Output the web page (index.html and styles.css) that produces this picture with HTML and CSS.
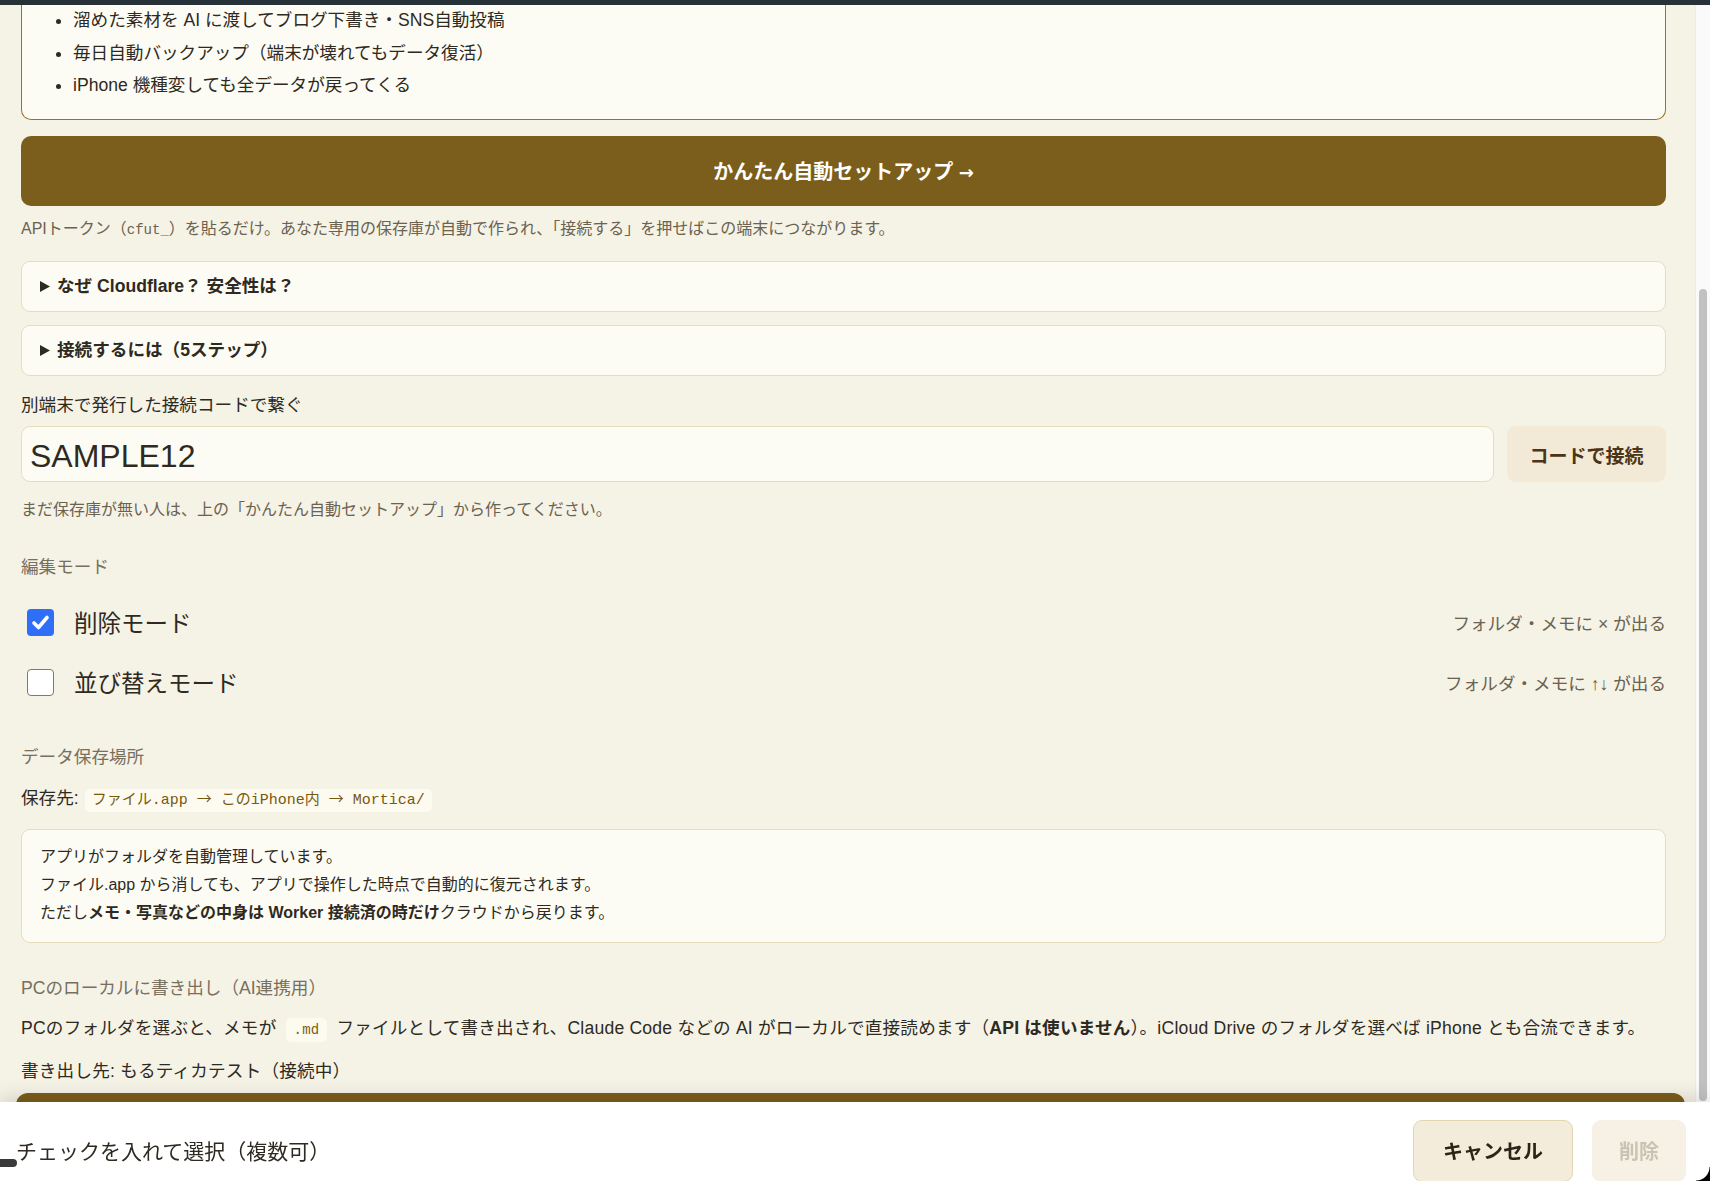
FILE: index.html
```html
<!DOCTYPE html>
<html lang="ja">
<head>
    <meta charset="UTF-8">
    <meta name="viewport" content="width=device-width, initial-scale=1.0">
    <title>設定</title>
    <link rel="stylesheet" href="styles.css">
</head>
<body>
    <div class="top-bar"></div>

    <div class="frame">
        <main class="sheet">
            <div class="feature-box">
                <ul>
                    <li>溜めた素材を AI に渡してブログ下書き・SNS自動投稿</li>
                    <li>毎日自動バックアップ（端末が壊れてもデータ復活）</li>
                    <li>iPhone 機種変しても全データが戻ってくる</li>
                </ul>
            </div>

            <button type="button" class="setup-button">かんたん自動セットアップ <span class="arrow">→</span></button>
            <p class="help">APIトークン（<code>cfut_</code>）を貼るだけ。あなた専用の保存庫が自動で作られ、「接続する」を押せばこの端末につながります。</p>

            <details class="fold">
                <summary><svg class="caret" width="10" height="11" viewBox="0 0 10 11"><path d="M0 0 L10 5.5 L0 11 Z" fill="#2e2a22"/></svg>なぜ Cloudflare？ 安全性は？</summary>
            </details>
            <details class="fold fold-second">
                <summary><svg class="caret" width="10" height="11" viewBox="0 0 10 11"><path d="M0 0 L10 5.5 L0 11 Z" fill="#2e2a22"/></svg>接続するには（5ステップ）</summary>
            </details>

            <label class="field-label" for="code">別端末で発行した接続コードで繋ぐ</label>
            <div class="code-row">
                <input type="text" id="code" class="code-input" value="SAMPLE12">
                <button type="button" class="code-button">コードで接続</button>
            </div>
            <p class="note">まだ保存庫が無い人は、上の「かんたん自動セットアップ」から作ってください。</p>

            <h3 class="section-title edit-title">編集モード</h3>
            <div class="mode-list">
                <div class="mode-row">
                    <span class="check checked">
                        <svg width="27" height="27" viewBox="0 0 27 27"><path d="M7 14 L11.5 18.5 L20 8.5" fill="none" stroke="#ffffff" stroke-width="3.6" stroke-linecap="round" stroke-linejoin="round"/></svg>
                    </span>
                    <span class="mode-name">削除モード</span>
                    <span class="mode-hint">フォルダ・メモに × が出る</span>
                </div>
                <div class="mode-row">
                    <span class="check"></span>
                    <span class="mode-name">並び替えモード</span>
                    <span class="mode-hint">フォルダ・メモに ↑↓ が出る</span>
                </div>
            </div>

            <h3 class="section-title storage-title">データ保存場所</h3>
            <p class="path-line">保存先:<code class="path-chip">ファイル.app <span class="chip-arrow">→</span> このiPhone内 <span class="chip-arrow">→</span> Mortica/</code></p>
            <div class="info-box">
                <p>アプリがフォルダを自動管理しています。</p>
                <p>ファイル.app から消しても、アプリで操作した時点で自動的に復元されます。</p>
                <p>ただし<strong>メモ・写真などの中身は Worker 接続済の時だけ</strong>クラウドから戻ります。</p>
            </div>

            <h3 class="section-title export-title">PCのローカルに書き出し（AI連携用）</h3>
            <p class="body-text">PCのフォルダを選ぶと、メモが <code class="inline-chip">.md</code> ファイルとして書き出され、Claude Code などの AI がローカルで直接読めます（<strong>API は使いません</strong>）。iCloud Drive のフォルダを選べば iPhone とも合流できます。</p>
            <p class="body-text export-target">書き出し先: もるティカテスト（接続中）</p>
            <button type="button" class="export-button">フォルダを選ぶ</button>
        </main>

        <div class="scrollbar"><div class="thumb"></div></div>
    </div>

    <div class="action-bar">
        <span class="action-text">チェックを入れて選択（複数可）</span>
        <div class="action-buttons">
            <button type="button" class="cancel-button">キャンセル</button>
            <button type="button" class="delete-button" disabled>削除</button>
        </div>
    </div>
    <div class="dock-handle"></div>
    <div class="window-corner"></div>
</body>
</html>
```

FILE: styles.css
```css
body {
    font-family: "Liberation Sans", "Noto Sans CJK JP", sans-serif;
    background-color: #f5f2e6;
    color: #2e2a22;
    margin: 0;
    height: 100vh;
    overflow: hidden;
}
p, h3, ul {
    margin: 0;
}
.top-bar {
    height: 5px;
    background-color: #263238;
}
.frame {
    display: flex;
    height: calc(100vh - 5px);
    overflow: hidden;
}
.sheet {
    flex: 1;
    padding: 0 29px 0 21px;
    overflow: hidden;
}
.feature-box {
    background-color: #fdfcf4;
    border: 1px solid #93742a;
    border-top: 0;
    border-radius: 0 0 10px 10px;
    padding: 2px 16px 21px;
}
.feature-box ul {
    padding-left: 35px;
    font-size: 17.6px;
    line-height: 26px;
}
.feature-box li + li {
    margin-top: 6.5px;
}
.setup-button {
    display: block;
    width: 100%;
    height: 70px;
    margin-top: 16px;
    padding-bottom: 3px;
    border: 0;
    border-radius: 10px;
    background-color: #7b5e1b;
    color: #ffffff;
    font-family: inherit;
    font-size: 20px;
    font-weight: bold;
}
.setup-button .arrow {
    font-family: "DejaVu Sans", sans-serif;
    font-size: 18px;
}
.help {
    margin-top: 11px;
    font-size: 16px;
    line-height: 24px;
    color: #6b6250;
}
.help code {
    font-family: "Liberation Mono", monospace;
    font-size: 14px;
}
.fold {
    margin-top: 19px;
    background-color: #fdfcf4;
    border: 1px solid #e7dcbc;
    border-radius: 9px;
}
.fold-second {
    margin-top: 13px;
}
.fold summary {
    display: flex;
    align-items: center;
    list-style: none;
    padding: 12px 18px;
    font-size: 17.6px;
    font-weight: bold;
    line-height: 25px;
}
.fold summary::-webkit-details-marker {
    display: none;
}
.caret {
    margin-right: 7px;
}
.field-label {
    display: block;
    margin-top: 16px;
    font-size: 17.6px;
    line-height: 26px;
}
.code-row {
    display: flex;
    gap: 13px;
    margin-top: 8px;
}
.code-input {
    flex: 1;
    height: 56px;
    box-sizing: border-box;
    padding: 5px 8px 0;
    border: 1px solid #e7dcbc;
    border-radius: 9px;
    background-color: #fdfcf4;
    color: #2e2a22;
    font-family: "Liberation Sans", sans-serif;
    font-size: 32px;
    outline: none;
}
.code-button {
    width: 159px;
    height: 56px;
    border: 0;
    border-radius: 9px;
    background-color: #f2e9d6;
    color: #4a3516;
    font-family: inherit;
    font-size: 19px;
    font-weight: bold;
}
.note {
    margin-top: 16px;
    font-size: 16px;
    line-height: 24px;
    color: #6b6250;
}
.section-title {
    font-size: 17.6px;
    font-weight: normal;
    line-height: 26px;
    color: #786f5e;
}
.edit-title {
    margin-top: 32px;
}
.mode-list {
    display: flex;
    flex-direction: column;
    gap: 16px;
    margin-top: 20px;
}
.mode-row {
    display: flex;
    align-items: center;
    height: 44px;
}
.check {
    width: 27px;
    height: 27px;
    box-sizing: border-box;
    margin-left: 6px;
    border: 1.5px solid #7a7a7a;
    border-radius: 4px;
    background-color: #ffffff;
}
.check.checked {
    border: 0;
    background-color: #2f6ef6;
}
.check svg {
    display: block;
}
.mode-name {
    flex: 1;
    margin-left: 20px;
    font-size: 23.5px;
}
.mode-hint {
    font-size: 17.6px;
    color: #6b6250;
}
.storage-title {
    margin-top: 40px;
}
.path-line {
    margin-top: 13px;
    font-size: 17.6px;
    line-height: 30px;
}
.path-chip {
    margin-left: 6px;
    padding: 3px 7px;
    border-radius: 5px;
    background-color: #fdfbf0;
    color: #7a580e;
    font-family: "Liberation Mono", "Noto Sans CJK JP", monospace;
    font-size: 15px;
}
.chip-arrow {
    font-family: "Noto Sans CJK JP", sans-serif;
}
.info-box {
    margin-top: 13px;
    padding: 13px 18px 15px;
    background-color: #fdfcf4;
    border: 1px solid #e7dcbc;
    border-radius: 9px;
    font-size: 16px;
    line-height: 28px;
}
.export-title {
    margin-top: 32px;
}
.body-text {
    margin-top: 12px;
    font-size: 17.6px;
    line-height: 30px;
    letter-spacing: 0.2px;
}
.inline-chip {
    margin: 0 4px;
    padding: 4px 8px;
    border-radius: 5px;
    background-color: #fdfbf0;
    color: #7d5c12;
    font-family: "Liberation Mono", monospace;
    font-size: 14px;
}
.export-target {
    margin-top: 11px;
}
.export-button {
    display: block;
    width: calc(100% + 24px);
    height: 60px;
    margin: 7px -19px 0 -5px;
    border: 0;
    border-radius: 12px;
    background-color: #7b5e1b;
    color: #ffffff;
    font-family: inherit;
    font-size: 20px;
    font-weight: bold;
}
.scrollbar {
    width: 15px;
    box-sizing: border-box;
    background-color: #fafafa;
    border-left: 1px solid #ebebeb;
}
.thumb {
    width: 8px;
    height: 812px;
    margin: 284px 0 0 3px;
    border-radius: 4px;
    background-color: #c1c1c1;
}
.action-bar {
    position: fixed;
    left: 0;
    right: 0;
    bottom: 0;
    height: 79px;
    box-sizing: border-box;
    padding: 18px 24px 0 16px;
    display: flex;
    justify-content: space-between;
    align-items: center;
    background-color: #ffffff;
    box-shadow: 0 -6px 18px rgba(0, 0, 0, 0.12);
}
.action-text {
    font-size: 21px;
    margin-top: -2px;
}
.action-buttons {
    display: flex;
    gap: 19px;
}
.cancel-button,
.delete-button {
    height: 62px;
    border-radius: 9px;
    font-family: inherit;
    font-size: 20px;
    font-weight: bold;
}
.cancel-button {
    width: 160px;
    border: 1px solid #e2d6b2;
    background-color: #f4ecdb;
    color: #2b2417;
}
.delete-button {
    width: 94px;
    border: 0;
    background-color: #f6f1e4;
    color: #c9c3b3;
}
.dock-handle {
    position: fixed;
    left: 0;
    bottom: 14px;
    width: 17px;
    height: 8px;
    border-radius: 0 4px 4px 0;
    background-color: #3a3a3a;
}
.window-corner {
    position: fixed;
    right: 0;
    bottom: 0;
    width: 14px;
    height: 14px;
    background: radial-gradient(circle at 0 0, transparent 13px, #000000 14px);
}
```
